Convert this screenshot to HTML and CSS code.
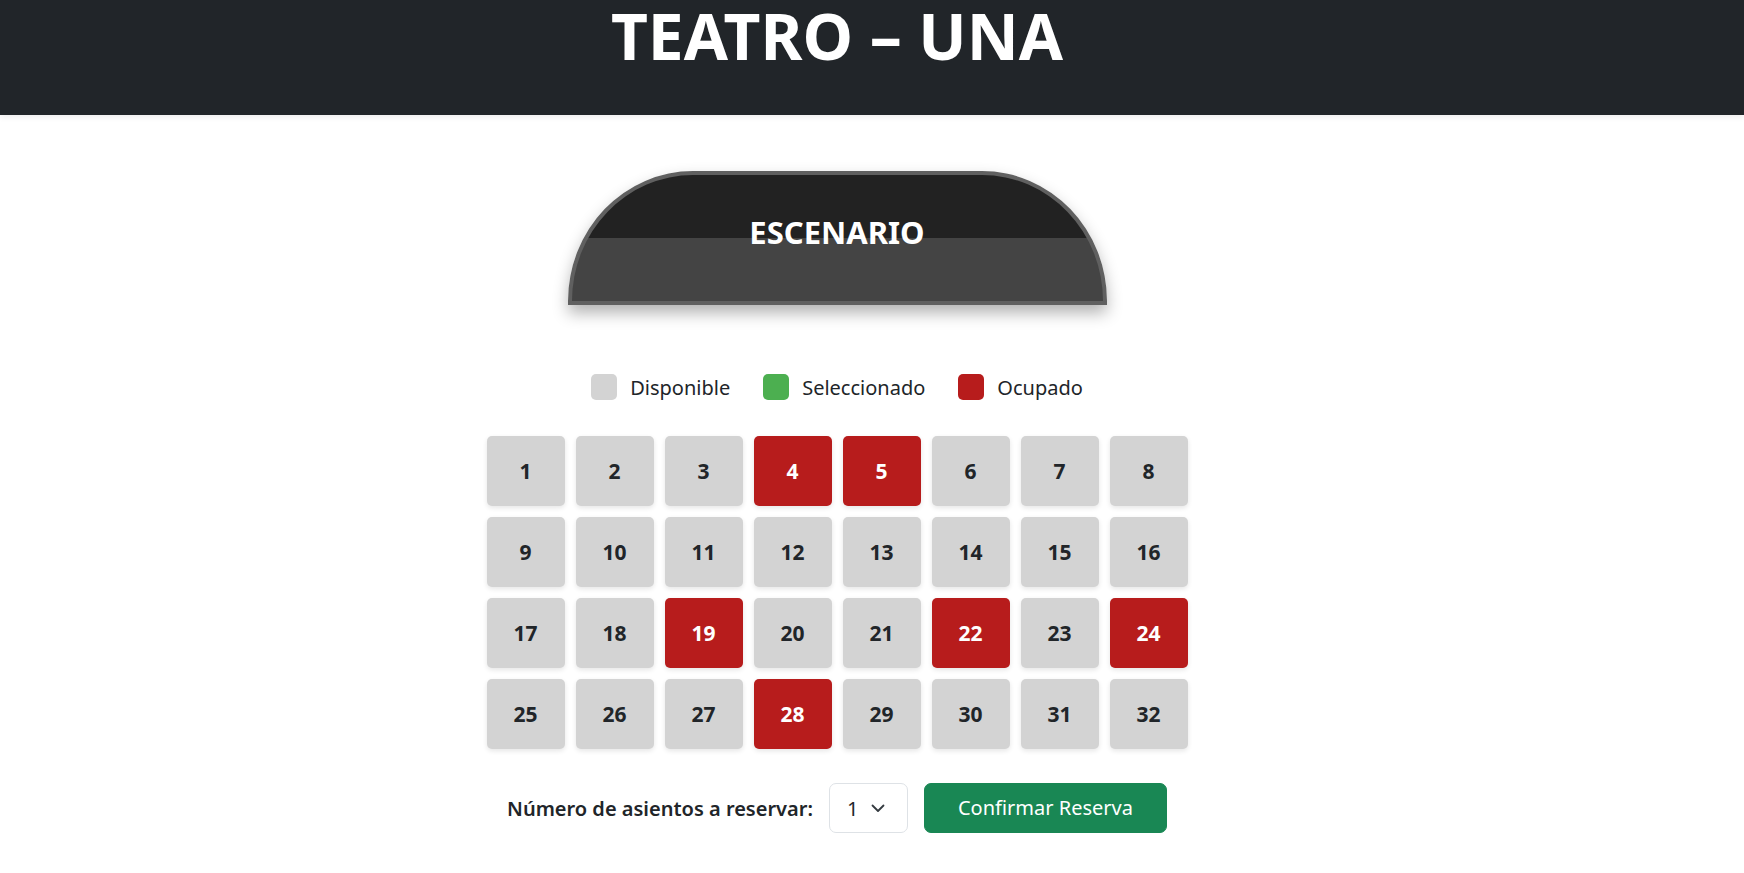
FILE: index.html
```html
<!DOCTYPE html>
<html lang="es">
<head>
<meta charset="utf-8">
<title>Teatro – UNA</title>
<link rel="stylesheet" href="styles.css">
</head>
<body>
<header class="topbar">
  <h1 class="title">TEATRO – UNA</h1>
</header>
<main class="page">
  <div class="stage"><h2 class="stage-label">ESCENARIO</h2></div>

  <div class="legend">
    <div class="legend-item"><span class="swatch swatch-free"></span><span>Disponible</span></div>
    <div class="legend-item"><span class="swatch swatch-sel"></span><span>Seleccionado</span></div>
    <div class="legend-item"><span class="swatch swatch-busy"></span><span>Ocupado</span></div>
  </div>

  <div class="seats">
    <div class="seat">1</div><div class="seat">2</div><div class="seat">3</div><div class="seat busy">4</div>
    <div class="seat busy">5</div><div class="seat">6</div><div class="seat">7</div><div class="seat">8</div>
    <div class="seat">9</div><div class="seat">10</div><div class="seat">11</div><div class="seat">12</div>
    <div class="seat">13</div><div class="seat">14</div><div class="seat">15</div><div class="seat">16</div>
    <div class="seat">17</div><div class="seat">18</div><div class="seat busy">19</div><div class="seat">20</div>
    <div class="seat">21</div><div class="seat busy">22</div><div class="seat">23</div><div class="seat busy">24</div>
    <div class="seat">25</div><div class="seat">26</div><div class="seat">27</div><div class="seat busy">28</div>
    <div class="seat">29</div><div class="seat">30</div><div class="seat">31</div><div class="seat">32</div>
  </div>

  <div class="controls">
    <label class="controls-label">Número de asientos a reservar:</label>
    <div class="select">
      <span>1</span>
      <svg class="chevron" width="14" height="9" viewBox="0 0 14 9" aria-hidden="true">
        <path d="M1.5 1.5 L7 7 L12.5 1.5" fill="none" stroke="#343a40" stroke-width="1.8" stroke-linecap="round" stroke-linejoin="round"/>
      </svg>
    </div>
    <button class="btn-confirm" type="button">Confirmar Reserva</button>
  </div>
</main>
</body>
</html>
```

FILE: styles.css
```css
* { box-sizing: border-box; }

body {
  margin: 0;
  font-family: "Noto Sans", "Open Sans", sans-serif;
  color: #212529;
  background: #fff;
}

.topbar {
  background: #212529;
  height: 115px;
  padding: 6px 70px 0 0;
  box-shadow: 0 2px 6px rgba(0, 0, 0, 0.08);
}

.title {
  margin: 0;
  text-align: center;
  color: #fff;
  font-size: 64px;
  line-height: 60px;
  font-weight: 700;
}

.page {
  padding-right: 70px;
  display: flex;
  flex-direction: column;
  align-items: center;
}

.stage {
  margin-top: 56px;
  width: 539px;
  height: 134px;
  border: 4px solid #606060;
  border-radius: 125px 125px 0 0 / 130px 130px 0 0;
  background: linear-gradient(to bottom, #222 50%, #444 50%);
  box-shadow: 0 8px 16px rgba(0, 0, 0, 0.3);
  display: flex;
  align-items: center;
  justify-content: center;
  padding-bottom: 10px;
}

.stage-label {
  margin: 0;
  color: #fff;
  font-size: 31px;
  font-weight: 700;
  line-height: 1.2;
}

.legend {
  margin-top: 67px;
  display: flex;
  align-items: center;
  gap: 33px;
  height: 30px;
  font-size: 20px;
}

.legend-item {
  display: flex;
  align-items: center;
  gap: 13px;
}

.swatch {
  width: 26px;
  height: 26px;
  border-radius: 5px;
}

.swatch-free { background: #d3d3d3; }
.swatch-sel { background: #4caf50; }
.swatch-busy { background: #b71c1c; }

.seats {
  margin-top: 34px;
  display: grid;
  grid-template-columns: repeat(8, 78px);
  grid-auto-rows: 70px;
  gap: 11px;
}

.seat {
  background: #d3d3d3;
  border-radius: 5px;
  box-shadow: 0 2px 5px rgba(0, 0, 0, 0.1);
  display: flex;
  align-items: center;
  justify-content: center;
  padding-bottom: 1px;
  font-size: 21px;
  font-weight: 700;
  color: #212529;
}

.seat.busy {
  background: #b71c1c;
  color: #fff;
}

.controls {
  margin-top: 34px;
  display: flex;
  align-items: center;
  gap: 16px;
}

.controls-label {
  font-size: 20px;
  font-weight: 600;
}

.select {
  width: 79px;
  height: 50px;
  border: 1px solid #dee2e6;
  border-radius: 7px;
  display: flex;
  align-items: center;
  justify-content: space-between;
  padding: 0 22px 0 17px;
  font-size: 20px;
  background: #fff;
}

.chevron { display: block; }

.btn-confirm {
  height: 50px;
  padding: 0 33px;
  border: 1px solid #198754;
  border-radius: 7px;
  background: #198754;
  color: #fff;
  font-family: inherit;
  font-size: 20px;
  line-height: 1.5;
}
```
